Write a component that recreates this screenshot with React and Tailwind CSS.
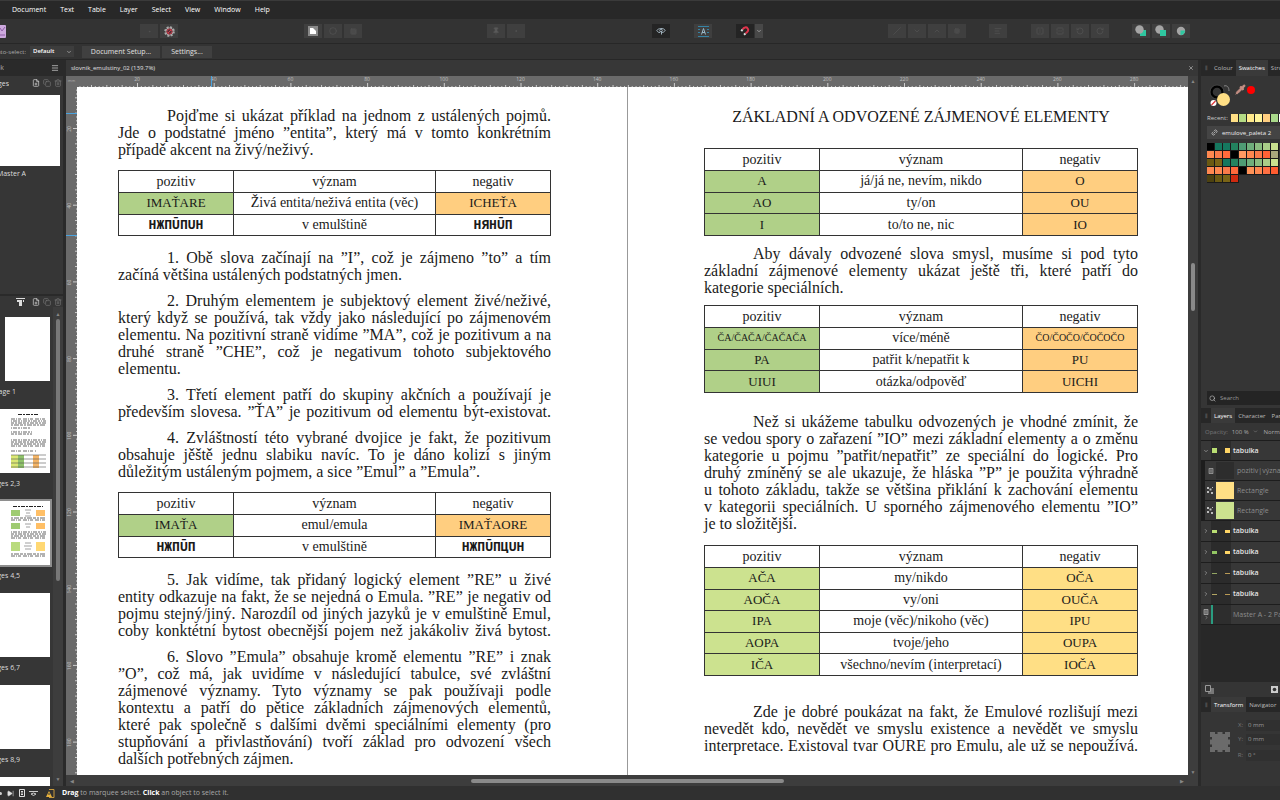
import React from "react";
import {
  Menu, FilePlus, Copy, Trash2, ChevronDown, ChevronRight, ChevronUp, Circle, Square, Pin,
  Dot, Slash, AlignLeft, FlipHorizontal, FlipVertical, RotateCw, RotateCcw,
  X, Search, Link2, Pipette, SkipForward,
} from "lucide-react";

const MENU = ["Document", "Text", "Table", "Layer", "Select", "View", "Window", "Help"];

const GREEN = "bg-[#b0d088]";
const LIME = "bg-[#cce28f]";
const ORANGE = "bg-[#ffce80]";
const YELLOW = "bg-[#ffdf85]";

const LEFT_PAGE = [
  {
    lines: [
      "Pojďme si ukázat příklad na jednom z ustálených pojmů.",
      "Jde o podstatné jméno ”entita”, který má v tomto konkrétním",
      "případě akcent na živý/neživý.",
    ],
  },
  {
    space: "mt-3",
    height: "h-[66px]",
    pos: GREEN,
    neg: ORANGE,
    rows: [
      ["IMAŤARE", "Živá entita/neživá entita (věc)", "ICHEŤA"],
      ["НЖПŪПUН", "v emulštině", "НЯНŪП", "script"],
    ],
  },
  {
    space: "mt-[13px]",
    lines: [
      "1. Obě slova začínají na ”I”, což je zájmeno ”to” a tím",
      "začíná většina ustálených podstatných jmen.",
    ],
  },
  {
    space: "mt-[9px]",
    lines: [
      "2. Druhým elementem je subjektový element živé/neživé,",
      "který když se používá, tak vždy jako následující po zájmenovém",
      "elementu. Na pozitivní straně vidíme ”MA”, což je pozitivum a na",
      "druhé straně ”CHE”, což je negativum tohoto subjektového",
      "elementu.",
    ],
  },
  {
    space: "mt-[9px]",
    lines: [
      "3. Třetí element patří do skupiny akčních a používají je",
      "především slovesa. ”ŤA” je pozitivum od elementu být-existovat.",
    ],
    full: true,
  },
  {
    space: "mt-[9px]",
    lines: [
      "4. Zvláštností této vybrané dvojice je fakt, že pozitivum",
      "obsahuje jěště jednu slabiku navíc. To je dáno kolizí s jiným",
      "důležitým ustáleným pojmem, a sice ”Emul” a ”Emula”.",
    ],
  },
  {
    space: "mt-3",
    height: "h-[66px]",
    pos: GREEN,
    neg: ORANGE,
    rows: [
      ["IMAŤA", "emul/emula", "IMAŤAORE"],
      ["НЖПŪП", "v emulštině", "НЖПŪПЦUН", "script"],
    ],
  },
  {
    space: "mt-[13px]",
    lines: [
      "5. Jak vidíme, tak přidaný logický element ”RE” u živé",
      "entity odkazuje na fakt, že se nejedná o Emula. ”RE” je negativ od",
      "pojmu stejný/jiný. Narozdíl od jiných jazyků je v emulštině Emul,",
      "coby konktétní bytost obecnější pojem než jakákoliv živá bytost.",
    ],
    full: true,
  },
  {
    space: "mt-[9px]",
    lines: [
      "6. Slovo ”Emula” obsahuje kromě elementu ”RE” i znak",
      "”O”, což má, jak uvidíme v následující tabulce, své zvláštní",
      "zájmenové významy. Tyto významy se pak používaji podle",
      "kontextu a patří do pětice základních zájmenových elementů,",
      "které pak společně s dalšími dvěmi speciálními elementy (pro",
      "stupňování a přivlastňování) tvoří základ pro odvození všech",
      "dalších potřebných zájmen.",
    ],
  },
];

const RIGHT_PAGE = [
  {
    space: "mt-[23px]",
    height: "h-[88px]",
    pos: GREEN,
    neg: ORANGE,
    rows: [
      ["A", "já/já ne, nevím, nikdo", "O"],
      ["AO", "ty/on", "OU"],
      ["I", "to/to ne, nic", "IO"],
    ],
  },
  {
    space: "mt-[9px]",
    lines: [
      "Aby dávaly odvozené slova smysl, musíme si pod tyto",
      "základní zájmenové elementy ukázat ještě tři, které patří do",
      "kategorie speciálních.",
    ],
  },
  {
    space: "mt-[9px]",
    height: "h-[88px]",
    pos: GREEN,
    neg: ORANGE,
    rows: [
      ["ČA/ČAČA/ČAČAČA", "více/méně", "ČO/ČOČO/ČOČOČO", "small"],
      ["PA", "patřit k/nepatřit k", "PU"],
      ["UIUI", "otázka/odpověď", "UICHI"],
    ],
  },
  {
    space: "mt-5",
    lines: [
      "Než si ukážeme tabulku odvozených je vhodné zmínit, že",
      "se vedou spory o zařazení ”IO” mezi základní elementy a o změnu",
      "kategorie u pojmu ”patřit/nepatřit” ze speciální do logické. Pro",
      "druhý zmíněný se ale ukazuje, že hláska ”P” je použita výhradně",
      "u tohoto základu, takže se většina přiklání k zachování elementu",
      "v kategorii speciálních. U sporného zájmenového elementu ”IO”",
      "je to složitější.",
    ],
  },
  {
    space: "mt-[13px]",
    height: "h-[131px]",
    pos: LIME,
    neg: YELLOW,
    rows: [
      ["AČA", "my/nikdo", "OČA"],
      ["AOČA", "vy/oni", "OUČA"],
      ["IPA", "moje (věc)/nikoho (věc)", "IPU"],
      ["AOPA", "tvoje/jeho", "OUPA"],
      ["IČA", "všechno/nevím (interpretací)", "IOČA"],
    ],
  },
  {
    space: "mt-[27px]",
    lines: [
      "Zde je dobré poukázat na fakt, že Emulové rozlišují mezi",
      "nevedět kdo, nevědět ve smyslu existence a nevědět ve smyslu",
      "interpretace. Existoval tvar OURE pro Emulu, ale už se nepoužívá.",
    ],
    full: true,
  },
];

const SWATCHES = [
  ["#000000", "#15785f", "#15785f", "#23825f", "#4f9b74", "#6fae7b", "#8abc80", "#a9cd88", "#c9e08e"],
  ["#ff8850", "#f97a4a", "#ff6a3c", "#000000", "#ff9a62", "#ff8850", "#f97a4a", "#ff6236", "#a9a77c"],
  ["#6b5a12", "#7a6416", "#15785f", "#23825f", "#4f9b74", "#6fae7b", "#8abc80", "#a9cd88", "#c9e08e"],
  ["#ff8850", "#ff8850", "#f97a4a", "#ff6a3c", "#000000", "#ff9257", "#ff8850", "#ff7042", "#ff5c30"],
  ["#4d4210", "#6b5a12", "#7a6416", "#cf2a10"],
];

const RECENT = ["#ffdf85", "#b4db84", "#ffe98a", "#fff59a", "#ffce80", "#a9d98a", "#ffffff"];

const Paragraph = ({ block }) => (
  <p className={`indent-[49px] text-base leading-[17px] ${block.space || ""}`}>
    {block.lines.map((line, i) => {
      const justify = block.full || i < block.lines.length - 1;
      return (
        <span
          key={line}
          className={`block whitespace-nowrap ${i ? "indent-0" : ""} ${justify ? "[text-align-last:justify]" : ""}`}
        >
          {line}
        </span>
      );
    })}
  </p>
);

const WordTable = ({ block }) => (
  <table className={`w-full table-fixed border-collapse text-center text-sm leading-4 ${block.space} ${block.height}`}>
    <colgroup>
      <col className="w-[115px]" />
      <col />
      <col className="w-[115px]" />
    </colgroup>
    <thead>
      <tr className="h-[22px]">
        <th className="border border-[#333] p-0 font-normal">pozitiv</th>
        <th className="border border-[#333] p-0 font-normal">význam</th>
        <th className="border border-[#333] p-0 font-normal">negativ</th>
      </tr>
    </thead>
    <tbody>
      {block.rows.map(([pos, meaning, neg, kind]) => {
        const script = kind === "script";
        const text = script
          ? "font-['DejaVu_Sans_Mono',monospace] text-[13px] font-bold"
          : kind === "small" ? "text-[10px]" : "text-[13px]";
        return (
          <tr key={pos} className="h-[21px]">
            <td className={`border border-[#333] p-0 ${text} ${script ? "" : block.pos}`}>{pos}</td>
            <td className="border border-[#333] p-0">{meaning}</td>
            <td className={`border border-[#333] p-0 ${text} ${script ? "" : block.neg}`}>{neg}</td>
          </tr>
        );
      })}
    </tbody>
  </table>
);

const Blocks = ({ items }) =>
  items.map((b, i) => (b.rows ? <WordTable key={i} block={b} /> : <Paragraph key={i} block={b} />));

const Tool = ({ label, dark, children }) => (
  <button
    aria-label={label}
    className={`flex h-[14px] w-[18px] items-center justify-center text-[#555] ${dark ? "bg-[#242424]" : "bg-[#3f3f3f]"}`}
  >
    {children}
  </button>
);

const Group = ({ space, children }) => <div className={`flex gap-[2px] ${space}`}>{children}</div>;

// teal square and grey disc, stacked in three different ways
const Insert = ({ mode }) => (
  <svg width="12" height="12" viewBox="0 0 12 12">
    {mode === "behind" && <path d="M5 5h6v6H5z" fill="#2fc7a0" />}
    <circle cx={mode === "inside" ? 6 : 4.5} cy={mode === "inside" ? 6 : 4.5} r="4.2" fill="#a5a5a5" />
    {mode === "front" && <path d="M5 5h6v6H5z" fill="#2fc7a0" />}
    {mode === "inside" && <path d="M5.500 5.500h4.500a4.200 4.200 0 0 1-4.500 4.500z" fill="#2fc7a0" />}
  </svg>
);

const Sheet = ({ size }) => (
  <svg width={size} height={size} viewBox="0 0 8 8" fill="none" stroke="currentColor">
    <path d="M1.500 .5h5v7h-5zM3 2.500h2M3 4h2M3 5.500h2" />
  </svg>
);

const Nodes = () => (
  <svg width="7" height="7" viewBox="0 0 7 7" fill="currentColor">
    <path d="M0 0h2v2H0zM2.500 1.500h2v2h-2zM0 4h2v2H0zM5 0h1v1H5zM4 5h2v2H4z" />
  </svg>
);

const MM = 3.835;

const RulerTop = () => (
  <svg className="h-[11px] w-full bg-[#6a6a6a]" aria-hidden="true">
    {Array.from({ length: 290 }, (_, i) => {
      const v = i + 5;
      const x = 60 + (v - 20) * MM;
      const h = v % 20 === 0 ? 4 : v % 4 === 0 ? 2 : 1;
      return <rect key={v} x={x} y={11 - h} width="1" height={h} fill="#cfcfcf" />;
    })}
    {Array.from({ length: 14 }, (_, i) => (
      <text key={i} x={60 + i * 20 * MM} y="5" textAnchor="middle" fontSize="5" fill="#c0c0c0" fontFamily="Open Sans, sans-serif">
        {20 + i * 20}
      </text>
    ))}
    <rect x="134" y="0" width="1" height="11" fill="#4aa3df" />
  </svg>
);

const RulerSide = () => (
  <svg className="h-full w-[11px] shrink-0 bg-[#6a6a6a]" aria-hidden="true">
    {Array.from({ length: 179 }, (_, i) => {
      const v = i + 10;
      const w = v % 20 === 0 ? 4 : v % 4 === 0 ? 2 : 1;
      return <rect key={v} x={11 - w} y={41 + (v - 20) * MM} width={w} height="1" fill="#cfcfcf" />;
    })}
    {Array.from({ length: 9 }, (_, i) => {
      const y = 42 + i * 20 * MM;
      return (
        <text key={i} x="5" y={y} transform={`rotate(-90 5 ${y})`} textAnchor="middle" fontSize="5" fill="#c0c0c0" fontFamily="Open Sans, sans-serif">
          {20 + i * 20}
        </text>
      );
    })}
    <rect x="0" y="26" width="11" height="1" fill="#4aa3df" />
    <rect x="0" y="148" width="11" height="1" fill="#4aa3df" />
  </svg>
);

const DASHES = ["3 1 2 1 4 1", "2 1 5 1 3 1", "4 1 1 1 3 2", "1 1 4 1 2 1"];

const ThumbText = ({ y, rows, end = 46 }) =>
  Array.from({ length: rows }, (_, i) => (
    <path key={i} d={`M11 ${y + i * 2}H${end}`} stroke="#666" strokeWidth="1" strokeDasharray={DASHES[(y + i) % 4]} />
  ));

const Thumb = ({ kind }) => (
  <svg width="50" height="64" viewBox="0 0 50 64" className="block bg-white">
    {kind === "a" && (
      <>
        <path d="M18 5.500H39" stroke="#222" strokeDasharray="4 1 2 1" />
        <ThumbText y={10} rows={4} />
        <ThumbText y={19} rows={1} end={30} />
        <ThumbText y={23} rows={2} end={32} />
        <ThumbText y={31} rows={4} />
        <ThumbText y={42} rows={1} end={36} />
        <path d="M11 46h7v13h-7z" fill="#dbe874" />
        <path d="M18 46h6v13h-6z" fill="#8fc36a" />
        <path d="M33 46h6v13h-6z" fill="#f5b567" />
        <path d="M11 46H46M11 50H46M11 54H46M11 58H46" stroke="#555" strokeWidth=".6" />
      </>
    )}
    {kind === "b" && (
      <>
        <path d="M13 5.500H43" stroke="#222" strokeDasharray="4 1 2 1" />
        <path d="M11 9h9v6h-9zM11 22h9v6h-9z" fill="#9fcb72" />
        <path d="M36 9h9v6h-9zM36 22h9v6h-9z" fill="#ffbf66" />
        <path d="M11 41h9v9h-9z" fill="#b9db7d" />
        <path d="M36 41h9v9h-9z" fill="#ffd873" />
        <path d="M25 9h6M26 12h4M25 15h6M25 23h6M26 26h4M25 42h6M24 45h8M25 48h6" stroke="#888" strokeWidth=".8" />
        <ThumbText y={17} rows={2} />
        <ThumbText y={31} rows={4} />
        <ThumbText y={53} rows={2} />
      </>
    )}
  </svg>
);

const PAGES = [
  { label: "Pages 2,3", kind: "a" },
  { label: "Pages 4,5", kind: "b", active: true },
  { label: "Pages 6,7" },
  { label: "Pages 8,9" },
];

const PagesPanel = () => (
  <aside className="flex w-[66px] shrink-0 flex-col overflow-hidden border-r-[3px] border-[#2a2a2a] bg-[#363636] text-[7px] leading-[10px] text-[#ddd]">
    <div className="flex h-4 shrink-0 items-center bg-[#2a2a2a] pr-1">
      <div className="flex w-1 justify-end overflow-hidden text-[#aaa]">Book</div>
      <button aria-label="Panel menu" className="ml-auto"><Menu size={8} /></button>
    </div>
    <div className="flex h-[19px] shrink-0 items-start gap-[3px] pt-[3px] pr-[1px]">
      <h2 className="flex w-[9px] justify-end overflow-hidden">Pages</h2>
      <button aria-label="Add master" className="ml-auto"><FilePlus size={8} /></button>
      <button aria-label="Duplicate master" className="text-[#777]"><Copy size={8} /></button>
      <button aria-label="Delete master" className="text-[#777]"><Trash2 size={8} /></button>
    </div>
    <div className="h-[71px] w-[60px] shrink-0 bg-white" />
    <div className="mt-[3px] flex w-[26px] shrink-0 justify-end overflow-hidden whitespace-nowrap">Master A</div>
    <div className="mt-[115px] flex h-[13px] shrink-0 items-center justify-end gap-[3px] border-t-2 border-[#2a2a2a] pr-[1px]">
      <button aria-label="Apply master" className="mr-1">
        <svg width="9" height="8" viewBox="0 0 9 8" className="fill-current"><path d="M0 0h9v1H0zM1 2h2v2H1zM3 2h3v6H3zM7 2h1v2H7z" /></svg>
      </button>
      <button aria-label="Add page"><FilePlus size={8} /></button>
      <button aria-label="Duplicate page" className="text-[#777]"><Copy size={8} /></button>
      <button aria-label="Delete page" className="text-[#777]"><Trash2 size={8} /></button>
    </div>
    <div className="flex min-h-0 flex-1">
      <div className="w-[53px] overflow-hidden pt-[10px]">
        <div className="ml-[5px] h-16 w-[45px] bg-white" />
        <div className="flex h-7 w-4 items-start justify-end overflow-hidden pt-[6px] whitespace-nowrap">Page 1</div>
        {PAGES.map((p) => (
          <div key={p.label}>
            <div className={`w-[50px] bg-white ${p.active ? "ring-2 ring-[#8e8e8e]" : ""}`}>
              <Thumb kind={p.kind} />
            </div>
            <div className="flex h-7 w-5 items-start justify-end overflow-hidden pt-[6px] whitespace-nowrap">{p.label}</div>
          </div>
        ))}
        <div className="h-16 w-[50px] bg-white" />
      </div>
      <div className="flex w-[10px] flex-col items-center bg-[#3d3d3d] py-1 text-[5px] leading-[6px] text-[#888]">
        <span>▲</span>
        <div className="mt-[2px] h-[262px] w-1 rounded-full bg-[#787878]" />
        <span className="mt-auto">▼</span>
      </div>
    </div>
  </aside>
);

const Tab = ({ active, children }) => (
  <button className={`h-full shrink-0 px-[3px] ${active ? "bg-[#3a3a3a] text-white" : "text-[#bbb]"}`}>{children}</button>
);

const Tabs = ({ names, active, height }) => (
  <div className={`flex items-center overflow-hidden bg-[#272727] ${height}`}>
    <span className="w-[10px] shrink-0 pl-1 text-[#666]">⦀</span>
    {names.map((n) => <Tab key={n} active={n === active}>{n}</Tab>)}
  </div>
);

// preview of a layer: a pair of small colour bars
const Bars = ({ size, left, right }) => (
  <span className="flex h-full w-5 shrink-0 items-center justify-between bg-[#2b2b2b] px-[1px]">
    <span className={`w-[5px] ${size} ${left}`} />
    <span className={`w-[5px] ${size} ${right}`} />
  </span>
);

const LayerRow = ({ size, left, right, open }) => (
  <li className={`flex items-center border-b border-[#1d1d1d] bg-[#373737] ${open ? "h-5" : "h-[21px]"}`}>
    <button aria-label="Expand layer" className="flex w-[10px] shrink-0 justify-center">
      {open ? <ChevronDown size={6} /> : <ChevronRight size={6} />}
    </button>
    <Bars size={size} left={left} right={right} />
    <span className="ml-[2px] text-[7px] font-semibold text-[#e6e6e6]">tabulka</span>
  </li>
);

const ChildRow = ({ icon, preview, name }) => (
  <li className="flex h-5 items-center border-b border-l-4 border-[#1d1d1d] bg-[#373737]">
    <span className="flex w-[11px] shrink-0 justify-center text-[#bbb]">{icon}</span>
    <span className={`h-[17px] w-[18px] shrink-0 ${preview}`} />
    <span className="ml-[3px] text-[7px] whitespace-nowrap text-[#8c8c8c]">{name}</span>
  </li>
);

const Field = ({ id, label, value }) => (
  <div className="flex h-[14px] items-center gap-[3px]">
    <label htmlFor={id} className="w-[9px] text-right text-[#777]">{label}:</label>
    <input id={id} defaultValue={value} className="h-[11px] w-9 bg-[#303030] px-[2px] text-[#999]" />
  </div>
);

const RightPanel = () => (
  <aside className="flex w-[82px] shrink-0 flex-col overflow-hidden border-l-[3px] border-[#2a2a2a] bg-[#353535] text-[6px] leading-[8px] text-[#ccc]">
    <Tabs names={["Colour", "Swatches", "Stroke"]} active="Swatches" height="h-4 shrink-0" />
    <section className="flex h-[315px] shrink-0 flex-col pl-[6px]">
      <div className="flex h-[37px] items-start pt-[8px] pl-[2px]">
        <svg width="24" height="24" viewBox="0 0 24 24">
          <circle cx="8" cy="8" r="5.5" fill="none" stroke="#000" strokeWidth="2.4" />
          <circle cx="8" cy="8" r="7" fill="none" stroke="#555" strokeWidth=".5" />
          <path d="M15 2c3-1 5 1 5 5" fill="none" stroke="#888" strokeWidth="1" />
          <circle cx="14.500" cy="15.500" r="6.500" fill="#ffdf85" />
          <circle cx="4.500" cy="19" r="3" fill="#fff" />
          <path d="M2.500 21l4-4" stroke="#d33" strokeWidth="1.2" />
        </svg>
        <Pipette size={11} className="ml-[2px] text-[#c58f84]" fill="#c58f84" />
        <span className="mt-[2px] ml-[1px] h-2 w-2 rounded-full bg-[#f00]" />
      </div>
      <div className="flex h-[10px] items-center overflow-hidden">
        <span className="w-[24px] shrink-0">Recent:</span>
        {RECENT.map((c) => (
          <span key={c} style={{ backgroundColor: c }} className="h-2 w-2 shrink-0 border-r border-[#222]" />
        ))}
      </div>
      <button className="mt-[3px] flex h-[13px] shrink-0 items-center gap-1 bg-[#444] pl-1 text-[#eee]">
        <Link2 size={7} className="-rotate-45" />
        <span className="whitespace-nowrap">emulove_paleta 2</span>
      </button>
      <div className="mt-[4px]">
        {SWATCHES.map((row, i) => (
          <div key={i} className="flex">
            {row.map((c, j) => (
              <span key={j} style={{ backgroundColor: c }} className="h-2 w-2 shrink-0 border-r border-b border-[#1a1a1a]" />
            ))}
          </div>
        ))}
      </div>
    </section>
    <div className="ml-[6px] flex h-[14px] shrink-0 items-center gap-1 bg-[#242424] pl-[2px]">
      <Search size={7} />
      <input aria-label="Search" placeholder="Search" className="w-14 placeholder:text-[#999]" />
    </div>
    <Tabs names={["Layers", "Character", "Paragraph"]} active="Layers" height="mt-[3px] h-[15px] shrink-0" />
    <div className="flex h-[17px] shrink-0 items-center overflow-hidden pl-1 whitespace-nowrap text-[#aaa]">
      <span className="text-[#777]">Opacity:</span>
      <button className="ml-1 flex shrink-0 items-center gap-1">100 % <ChevronDown size={5} /></button>
      <span className="ml-[6px]">Normal</span>
    </div>
    <ul className="shrink-0 overflow-hidden border-t border-[#1d1d1d]">
      <LayerRow open size="h-[5px]" left="bg-[#b9dd72]" right="bg-[#ffd565]" />
      <ChildRow icon={<Sheet size={6} />} preview="bg-[#2d2d2d]" name="pozitiv|význam" />
      <ChildRow icon={<Nodes />} preview="bg-[#ffdf85]" name="Rectangle" />
      <ChildRow icon={<Nodes />} preview="bg-[#cce28f]" name="Rectangle" />
      <LayerRow size="h-[3px]" left="bg-[#b9dd72]" right="bg-[#ffd565]" />
      <LayerRow size="h-[3px]" left="bg-[#93c663]" right="bg-[#ffd565]" />
      <LayerRow size="h-px" left="bg-[#93a663]" right="bg-[#b99a55]" />
      <LayerRow size="h-px" left="bg-[#b3a663]" right="bg-[#b99a55]" />
      <li className="flex h-5 items-center border-b border-[#1d1d1d] bg-[#373737]">
        <span className="flex w-[10px] shrink-0 flex-col items-center"><Sheet size={6} /><ChevronRight size={5} /></span>
        <span className="h-full w-5 shrink-0 border-l-2 border-[#2a9c80] bg-[#2d2d2d]" />
        <span className="ml-[2px] text-[7px] whitespace-nowrap text-[#8c8c8c]">Master A - 2 Pages</span>
      </li>
    </ul>
    <div className="min-h-0 flex-1 bg-[#282828]" />
    <div className="flex h-[15px] shrink-0 items-center justify-between pr-[2px] pl-1">
      <button aria-label="Edit all layers">
        <svg width="9" height="9" viewBox="0 0 9 9"><path d="M3 3h6v6H3z" fill="#777" /><path d="M.5.500h5v6h-5z" fill="#353535" stroke="#999" /></svg>
      </button>
      <button aria-label="Mask layer">
        <svg width="7" height="7" viewBox="0 0 7 7"><path d="M0 0h7v7H0z" fill="#ccc" /><circle cx="3.500" cy="3.500" r="1.800" fill="#333" /></svg>
      </button>
    </div>
    <Tabs names={["Transform", "Navigator", "History"]} active="Transform" height="h-[15px] shrink-0" />
    <div className="flex h-[74px] shrink-0 pt-[6px]">
      <svg width="20" height="20" viewBox="0 0 20 20" className="mt-[14px] ml-[9px] shrink-0" fill="#6b6b6b">
        <path d="M2 2h16v16H2z" />
        <path d="M0 0h5v5H0zM7.500 0h5v4h-5zM15 0h5v5h-5zM0 7.500h4v5H0zM16 7.500h4v5h-4zM0 15h5v5H0zM7.500 16h5v4h-5zM15 15h5v5h-5z" />
      </svg>
      <div className="ml-1 shrink-0">
        <Field id="pos-x" label="X" value="0 mm" />
        <Field id="pos-y" label="Y" value="0 mm" />
        <div className="mt-[2px]"><Field id="rotation" label="R" value="0 °" /></div>
      </div>
    </div>
  </aside>
);

export default function App() {
  return (
    <div className="flex h-screen flex-col overflow-hidden bg-[#333] font-['Open_Sans',sans-serif] text-[7px] leading-[10px] text-[#e0e0e0]">
      {/* Menu bar */}
      <nav className="flex h-[19px] shrink-0 items-center gap-[14px] border-t border-[#3a3a3a] bg-[#282828] pl-3">
        {MENU.map((m) => <button key={m} className="text-white">{m}</button>)}
      </nav>

      {/* Toolbar */}
      <div className="flex h-[25px] shrink-0 items-center border-b border-[#272727]">
        <svg width="6" height="13" viewBox="0 0 6 13" className="shrink-0">
          <path d="M0 0h5q1 0 1 1v11q0 1-1 1H0z" fill="#cda9de" />
          <path d="M0 3l2 3 3-4M0 10h5" stroke="#8e5fa6" fill="none" />
        </svg>
        <Group space="ml-[134px]">
          <Tool label="Preflight"><Dot size={9} /></Tool>
          <Tool label="Document status">
            <svg width="11" height="11" viewBox="0 0 11 11">
              <circle cx="5.500" cy="5.500" r="4.300" fill="none" stroke="#aaa" strokeWidth="2" strokeDasharray="2 1.377" />
              <circle cx="5.500" cy="5.500" r="3.600" fill="none" stroke="#aaa" strokeWidth="1" />
              <circle cx="5.500" cy="5.500" r="2.600" fill="#5a3038" stroke="#c23b4a" strokeWidth="1" />
              <path d="M4 7l3-3" stroke="#d23b4a" />
            </svg>
          </Tool>
        </Group>
        <Group space="ml-[126px]">
          <Tool label="Page">
            <svg width="10" height="10" viewBox="0 0 10 10"><path d="M0 0h10v10H0z" fill="#888" /><path d="M2 2h3l3 3v3H2z" fill="#fff" /></svg>
          </Tool>
          <Tool label="Ellipse"><Circle size={8} /></Tool>
          <Tool label="Square"><Square size={7} fill="#4a4a4a" /></Tool>
        </Group>
        <Group space="ml-[125px]">
          <Tool label="Pin"><Pin size={8} fill="#5a5a5a" /></Tool>
          <Tool label="Float"><Dot size={10} /></Tool>
        </Group>
        <Group space="ml-[127px]">
          <Tool label="Preview mode" dark>
            <svg width="10" height="8" viewBox="0 0 10 8" fill="none" stroke="#9fb0bb">
              <path d="M.8 3.500C2 1.200 7.500.600 9.200 3.200 8.500 5 7 5.500 6 5.500M.8 3.500C1.500 5 2.500 5.500 4 5.500" />
              <circle cx="5" cy="3.500" r="1.300" />
              <path d="M5.500 4v3.500" />
            </svg>
          </Tool>
        </Group>
        <Group space="ml-6">
          <Tool label="Baseline grid">
            <svg width="11" height="11" viewBox="0 0 11 11" fill="none" stroke="#3583a5">
              <path d="M0 .5h11M0 10.500h11M0 3.500h2M9 3.500h2M0 6.500h2M9 6.500h2" />
              <path d="M3.500 8.500l2-6 2 6M4 6.500h3" stroke="#9ab8c8" />
            </svg>
          </Tool>
        </Group>
        <div className="ml-6 flex gap-px">
          <Tool label="Snapping" dark>
            <svg width="10" height="10" viewBox="0 0 10 10" fill="none" strokeWidth="2">
              <path d="M2.500 3.500C4 1 6.500.800 7.600 2.300 9 4 8 6 5.500 7.500" stroke="#e0344c" />
              <path d="M1.300 5.200l1.200-1.700M4 8.800l1.500-1.300" stroke="#ddd" />
            </svg>
          </Tool>
          <button aria-label="Snapping options" className="flex h-[14px] w-2 items-center justify-center bg-[#484848]"><ChevronDown size={6} /></button>
        </div>
        <Group space="ml-[125px]">
          <Tool label="Move to back"><Slash size={8} /></Tool>
          <Tool label="Move back"><ChevronDown size={8} /></Tool>
          <Tool label="Move forward"><ChevronUp size={8} /></Tool>
          <Tool label="Move to front"><Square size={6} fill="#4a4a4a" /></Tool>
        </Group>
        <Group space="ml-[23px]"><Tool label="Align"><AlignLeft size={8} /></Tool></Group>
        <Group space="ml-6">
          <Tool label="Flip horizontal"><FlipHorizontal size={8} /></Tool>
          <Tool label="Flip vertical"><FlipVertical size={8} /></Tool>
          <Tool label="Rotate left"><RotateCcw size={8} /></Tool>
          <Tool label="Rotate right"><RotateCw size={8} /></Tool>
        </Group>
        <Group space="ml-[23px]">
          <Tool label="Insert behind"><Insert mode="behind" /></Tool>
          <Tool label="Insert in front"><Insert mode="front" /></Tool>
          <Tool label="Insert inside"><Insert mode="inside" /></Tool>
        </Group>
      </div>

      {/* Context bar */}
      <div className="flex h-4 shrink-0 items-center border-b border-[#272727]">
        <label htmlFor="auto-select" className="flex w-[26px] justify-end overflow-hidden text-[6px] whitespace-nowrap text-[#aaa]">Auto-select:</label>
        <div className="relative ml-1 h-[11px] w-11">
          <select id="auto-select" className="h-[11px] w-full appearance-none bg-[#3d3d3d] pl-[3px] text-[6px] leading-[11px] font-semibold text-white">
            <option>Default</option>
          </select>
          <ChevronDown size={6} className="pointer-events-none absolute top-[3px] right-[2px]" />
        </div>
        <button className="ml-2 h-3 w-[78px] bg-[#404040]">Document Setup...</button>
        <button className="ml-[2px] h-3 w-[50px] bg-[#404040]">Settings...</button>
      </div>

      <div className="flex min-h-0 flex-1">
        <PagesPanel />

        {/* Document window */}
        <main className="flex min-w-0 flex-1 flex-col">
          <div className="flex h-4 shrink-0 items-center justify-between bg-[#373737] pr-1 pl-[5px]">
            <span className="text-[6px]">slovnik_emulstiny_02 (139.7%)</span>
            <button aria-label="Close document"><X size={6} /></button>
          </div>
          <div className="flex min-h-0 flex-1">
            <div className="flex min-w-0 flex-1 flex-col">
              <div className="flex shrink-0">
                <div className="h-[11px] w-[11px] shrink-0 bg-[#6a6a6a] text-center text-[4px] leading-[9px] text-[#aaa]">mm</div>
                <RulerTop />
              </div>
              <div className="flex min-h-0 flex-1">
                <RulerSide />
                <div className="flex flex-1 overflow-hidden bg-white font-['Liberation_Serif',serif] text-[#1a1a1a]">
                  <article className="shrink-0 border-r border-[#999] pt-5 pr-[76px] pl-[41px]">
                    <div className="w-[433px]"><Blocks items={LEFT_PAGE} /></div>
                  </article>
                  <article className="shrink-0 pt-[21px] pl-[76px]">
                    <div className="w-[434px]">
                      <h1 className="text-center text-base leading-[17px]">ZÁKLADNÍ A ODVOZENÉ ZÁJMENOVÉ ELEMENTY</h1>
                      <Blocks items={RIGHT_PAGE} />
                    </div>
                  </article>
                </div>
              </div>
            </div>
            <div className="flex w-[10px] shrink-0 flex-col items-center bg-[#3d3d3d] pt-[2px] text-[5px] leading-[6px] text-[#888]">
              <span>▲</span>
              <div className="mt-[179px] h-12 w-1 rounded-full bg-[#8a8a8a]" />
              <span className="mt-auto">▼</span>
            </div>
          </div>
          <div className="flex h-[11px] shrink-0 items-center bg-[#3d3d3d] pr-[14px] pl-1 text-[5px] leading-[6px] text-[#888]">
            <span>◀</span>
            <div className="mx-auto h-1 w-[313px] rounded-full bg-[#8a8a8a]" />
            <span>▶</span>
          </div>
        </main>

        <RightPanel />
      </div>

      {/* Status bar */}
      <footer className="flex h-[14px] shrink-0 items-center bg-[#303030]">
        <div className="flex w-[62px] items-center gap-[3px]">
          <span className="h-[3px] w-[2px] rounded-r-full bg-[#ccc]" />
          <button aria-label="Last page" className="ml-[2px]"><SkipForward size={7} fill="currentColor" /></button>
          <button aria-label="Page list" className="ml-[1px]"><Sheet size={8} /></button>
          <button aria-label="View mode">
            <svg width="9" height="7" viewBox="0 0 9 7" fill="none" stroke="#ccc"><path d="M0 1.500h9M2 4q2.500-2 5 0-2.500 3-5 0" /></svg>
          </button>
          <button aria-label="Preflight warnings" className="ml-[5px]">
            <svg width="9" height="9" viewBox="0 0 9 9" fill="none">
              <path d="M3 .5h5v8H3" stroke="#c99a3c" />
              <path d="M0 8l3-6 3 6z" fill="#e8b23c" />
              <path d="M3 4v2" stroke="#333" />
            </svg>
          </button>
        </div>
        <p className="text-[#a8a8a8]">
          <b className="text-white">Drag</b> to marquee select. <b className="text-white">Click</b> an object to select it.
        </p>
      </footer>
    </div>
  );
}
